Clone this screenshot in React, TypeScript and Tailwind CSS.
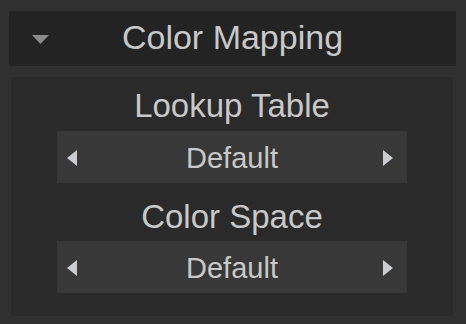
import React from "react";

const font = { fontFamily: '"Liberation Sans", Arial, sans-serif' };

function Selector({ value }: { value: string }) {
  return (
    <div className="mx-[46px] grid h-[52px] grid-cols-[24px_1fr_24px] items-center bg-[#383838]">
      <div className="flex justify-start pl-[10px]">
        <svg width="10" height="16" viewBox="0 0 10 16">
          <polygon points="10,0 10,16 0,8" fill="#c9ccd1" />
        </svg>
      </div>
      <div className="text-center text-[29px] leading-[52px] text-[#c8c8c8] pt-[1px]">{value}</div>
      <div className="flex justify-end pr-[14px]">
        <svg width="10" height="16" viewBox="0 0 10 16">
          <polygon points="0,0 0,16 10,8" fill="#c9ccd1" />
        </svg>
      </div>
    </div>
  );
}

export default function App() {
  return (
    <div className="h-[324px] w-[466px] bg-[#303030] pt-[11px]" style={font}>
      <div className="ml-[9px] mr-[10px] grid h-[55px] grid-cols-[1fr_auto_1fr] items-center bg-[#232323]">
        <div className="pl-[23px] pt-[1px]">
          <svg width="17" height="9" viewBox="0 0 17 9">
            <polygon points="0,0 17,0 8.5,9" fill="#8a8a8a" />
          </svg>
        </div>
        <div className="self-start text-[34px] leading-[53px] text-[#c8c8c8]">Color Mapping</div>
        <div />
      </div>
      <div className="ml-[11px] mr-[13px] mt-[11px] h-[239px] bg-[#2a2a2a] pt-[9px]">
        <div className="text-center text-[33px] leading-[40px] text-[#c8c8c8]">Lookup Table</div>
        <div className="mt-[5px]">
          <Selector value="Default" />
        </div>
        <div className="mt-[14px] text-center text-[33px] leading-[40px] text-[#c8c8c8]">Color Space</div>
        <div className="mt-[4px]">
          <Selector value="Default" />
        </div>
      </div>
    </div>
  );
}
